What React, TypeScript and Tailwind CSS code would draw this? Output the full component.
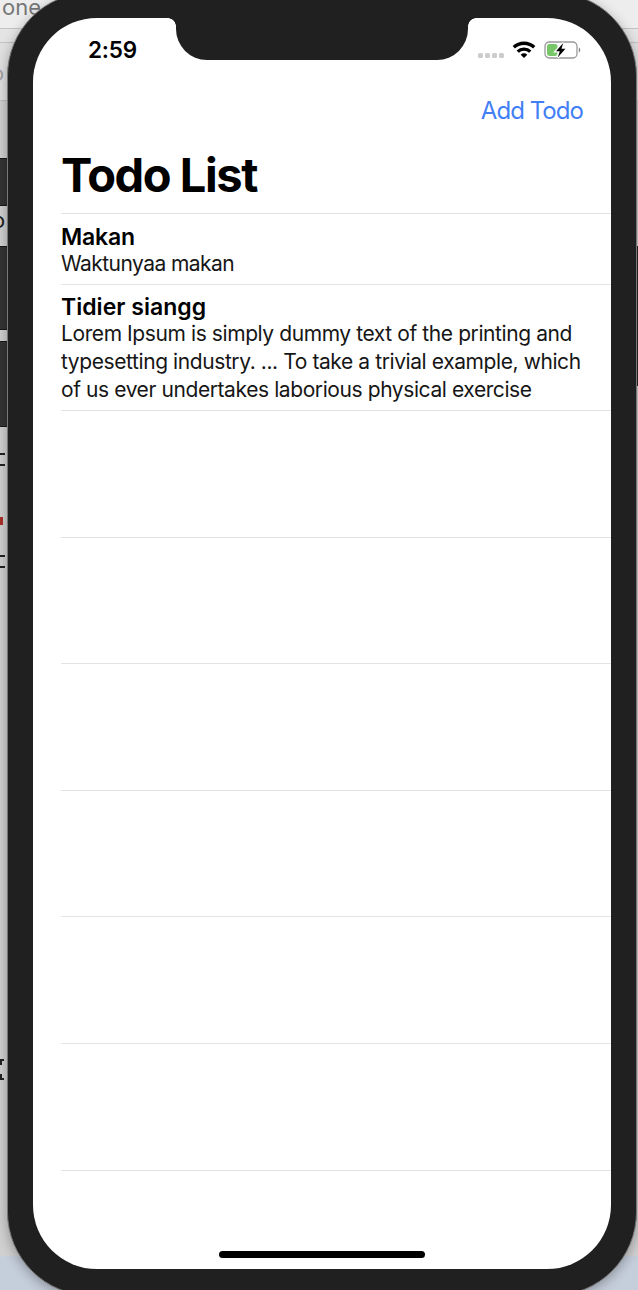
import type { ReactNode } from "react";

type Todo = { title: string; pad: string; titleClass: string; textClass: string; lines: string[] };

function Gutter() {
  return (
    <div className="absolute inset-y-0 left-0 w-[8px]">
      <div className="flex flex-col pt-[59px] text-[22px] leading-[28px]">
        <span className="-ml-[9px] h-[99px] text-[#a5a5a5]">o</span>
        <div className="h-[48px] border-y border-[#181818] bg-[#343434]" />
        <span className="-ml-[8px] h-[40px] text-[#222222]">o</span>
        <div className="h-[84px] border-y border-[#181818] bg-[#343434]" />
        <div className="mt-[11px] h-[86px] border-y border-[#181818] bg-[#343434]" />
        <div className="mt-[26px] h-[13px] w-[5px] border-y-2 border-[#222222]" />
        <div className="mt-[51px] h-[8px] w-[3px] bg-[#a93028]" />
        <div className="mt-[30px] h-[13px] w-[5px] border-y-2 border-[#222222]" />
        <div className="mt-[491px] flex h-[21px] w-[4px] flex-col justify-between">
          <div className="h-[6px] border-t-2 border-l-2 border-[#222222]" />
          <div className="h-[6px] border-b-2 border-l-2 border-[#222222]" />
        </div>
      </div>
    </div>
  );
}

function Backdrop() {
  return (
    <div className="absolute inset-0 overflow-hidden bg-[#d2d2d2] font-['Inter',sans-serif]" aria-hidden="true">
      <div className="flex h-[28px] bg-[#ededed] pl-[2px]">
        <span className="-mt-[7px] text-[22px] leading-[28px] text-[#777777]">one</span>
      </div>
      <div className="h-[15px] border-y border-[#c3c3c3] bg-[#e4e4e4]" />
      <div className="h-[58px] border-b border-[#bdbdbd] bg-[#e0e0e0]" />
      <div className="h-[1155px] bg-[#d0d0d0] pt-[145px]">
        <div className="ml-auto h-[140px] w-[3px] bg-[#272727]" />
      </div>
      <div className="h-[34px] bg-[#c5cedb]" />
      <Gutter />
    </div>
  );
}

function Wifi() {
  return (
    <svg className="h-[18px] w-[24px]" viewBox="0 0 24 18" fill="none" stroke="#000" strokeWidth="3.3">
      <path d="M1.8 6.3C7.4.9 16.6.9 22.2 6.3" />
      <path d="M5.7 10.6c3.5-3.3 9.1-3.3 12.6 0" />
      <path d="M8.7 13.7c1.9-1.8 4.7-1.8 6.6 0L12 17z" fill="#000" stroke="none" />
    </svg>
  );
}

function Battery() {
  return (
    <svg className="h-[20px] w-[37px]" viewBox="0 0 37 20" fill="none">
      <rect x="1" y="2" width="32" height="16" rx="4.2" stroke="#999" strokeWidth="1.3" />
      <path d="M34.8 7.5c2 .6 2 4.400 0 5z" fill="#888" />
      <rect x="3" y="4" width="10.5" height="12" rx="2.4" fill="#77c667" />
      <path
        d="M19.200 3 12 11.200H15.800l-2 6.200L21.400 8.800H17.500z"
        fill="#000"
        stroke="#fff"
        strokeWidth="2.6"
        paintOrder="stroke"
      />
    </svg>
  );
}

function StatusBar() {
  return (
    <div className="flex h-[63px] items-center justify-between pr-[30px] pl-[55px]">
      <span className="text-[22.5px] font-semibold tracking-[-0.2px]">2:59</span>
      <div className="flex items-center">
        <div className="mt-[11px] mr-[8px] flex gap-[2px]">
          <i className="size-[5px] rounded-[1.5px] bg-[#cccccc]" />
          <i className="size-[5px] rounded-[1.5px] bg-[#cccccc]" />
          <i className="size-[5px] rounded-[1.5px] bg-[#cccccc]" />
          <i className="size-[5px] rounded-[1.5px] bg-[#cccccc]" />
        </div>
        <Wifi />
        <div className="ml-[8px]">
          <Battery />
        </div>
      </div>
    </div>
  );
}

function Notch() {
  return (
    <div className="absolute inset-x-0 top-0 flex justify-center">
      <div className="size-[8px] bg-[radial-gradient(circle_at_bottom_left,transparent_7.5px,#202020_8px)]" />
      <div className="h-[42px] w-[292px] rounded-b-[31px] bg-[#202020]" />
      <div className="size-[8px] bg-[radial-gradient(circle_at_bottom_right,transparent_7.5px,#202020_8px)]" />
    </div>
  );
}

function Row({ height, children }: { height: string; children?: ReactNode }) {
  return <li className={`border-b border-[#e2e2e2] ${height}`}>{children}</li>;
}

function TodoText({ todo }: { todo: Todo }) {
  return (
    <div className={todo.pad}>
      <h2 className={`text-[23px] leading-[28px] font-semibold ${todo.titleClass}`}>{todo.title}</h2>
      <p className={`-mt-[1px] text-[21px] leading-[28px] whitespace-nowrap text-[#161616] ${todo.textClass}`}>
        {todo.lines.map((line) => (
          <span key={line} className="block">
            {line}
          </span>
        ))}
      </p>
    </div>
  );
}

const makan: Todo = {
  title: "Makan",
  pad: "pt-[9px]",
  titleClass: "tracking-[-0.2px]",
  textClass: "tracking-[-0.55px]",
  lines: ["Waktunyaa makan"],
};

const siang: Todo = {
  title: "Tidier siangg",
  pad: "pt-[8px]",
  titleClass: "tracking-[0.02px]",
  textClass: "tracking-[-0.41px]",
  lines: [
    "Lorem Ipsum is simply dummy text of the printing and",
    "typesetting industry. ... To take a trivial example, which",
    "of us ever undertakes laborious physical exercise",
  ],
};

export default function App() {
  return (
    <div className="relative h-[1290px] w-[638px] overflow-hidden">
      <Backdrop />
      <div className="absolute top-[-8px] left-[7px] h-[1304px] w-[630px] rounded-[84px] border border-[#777777] bg-[#202020] px-[25px] pt-[25px] shadow-[0_3px_12px_rgba(0,0,0,0.3)]">
        <main className="relative h-[1251px] w-[578px] overflow-hidden rounded-[64px] bg-white font-['Inter',sans-serif] text-black">
          <Notch />
          <StatusBar />
          <div className="flex h-[58px] items-center justify-end pt-[2px] pr-[28px]">
            <button className="text-[24px] leading-[30px] tracking-[-0.95px] text-[#427ff7]">Add Todo</button>
          </div>
          <h1 className="h-[74px] pt-[7px] pl-[28px] text-[47px] leading-[58px] font-bold tracking-[-1.45px]">
            Todo List
          </h1>
          <ul className="ml-[28px] border-t border-[#e2e2e2]">
            <Row height="h-[71px]">
              <TodoText todo={makan} />
            </Row>
            <Row height="h-[126px]">
              <TodoText todo={siang} />
            </Row>
            <Row height="h-[127px]" />
            <Row height="h-[126px]" />
            <Row height="h-[127px]" />
            <Row height="h-[126px]" />
            <Row height="h-[127px]" />
            <Row height="h-[127px]" />
          </ul>
          <div className="ml-[186px] mt-[80px] h-[7px] w-[206px] rounded-full bg-black" />
        </main>
      </div>
    </div>
  );
}
